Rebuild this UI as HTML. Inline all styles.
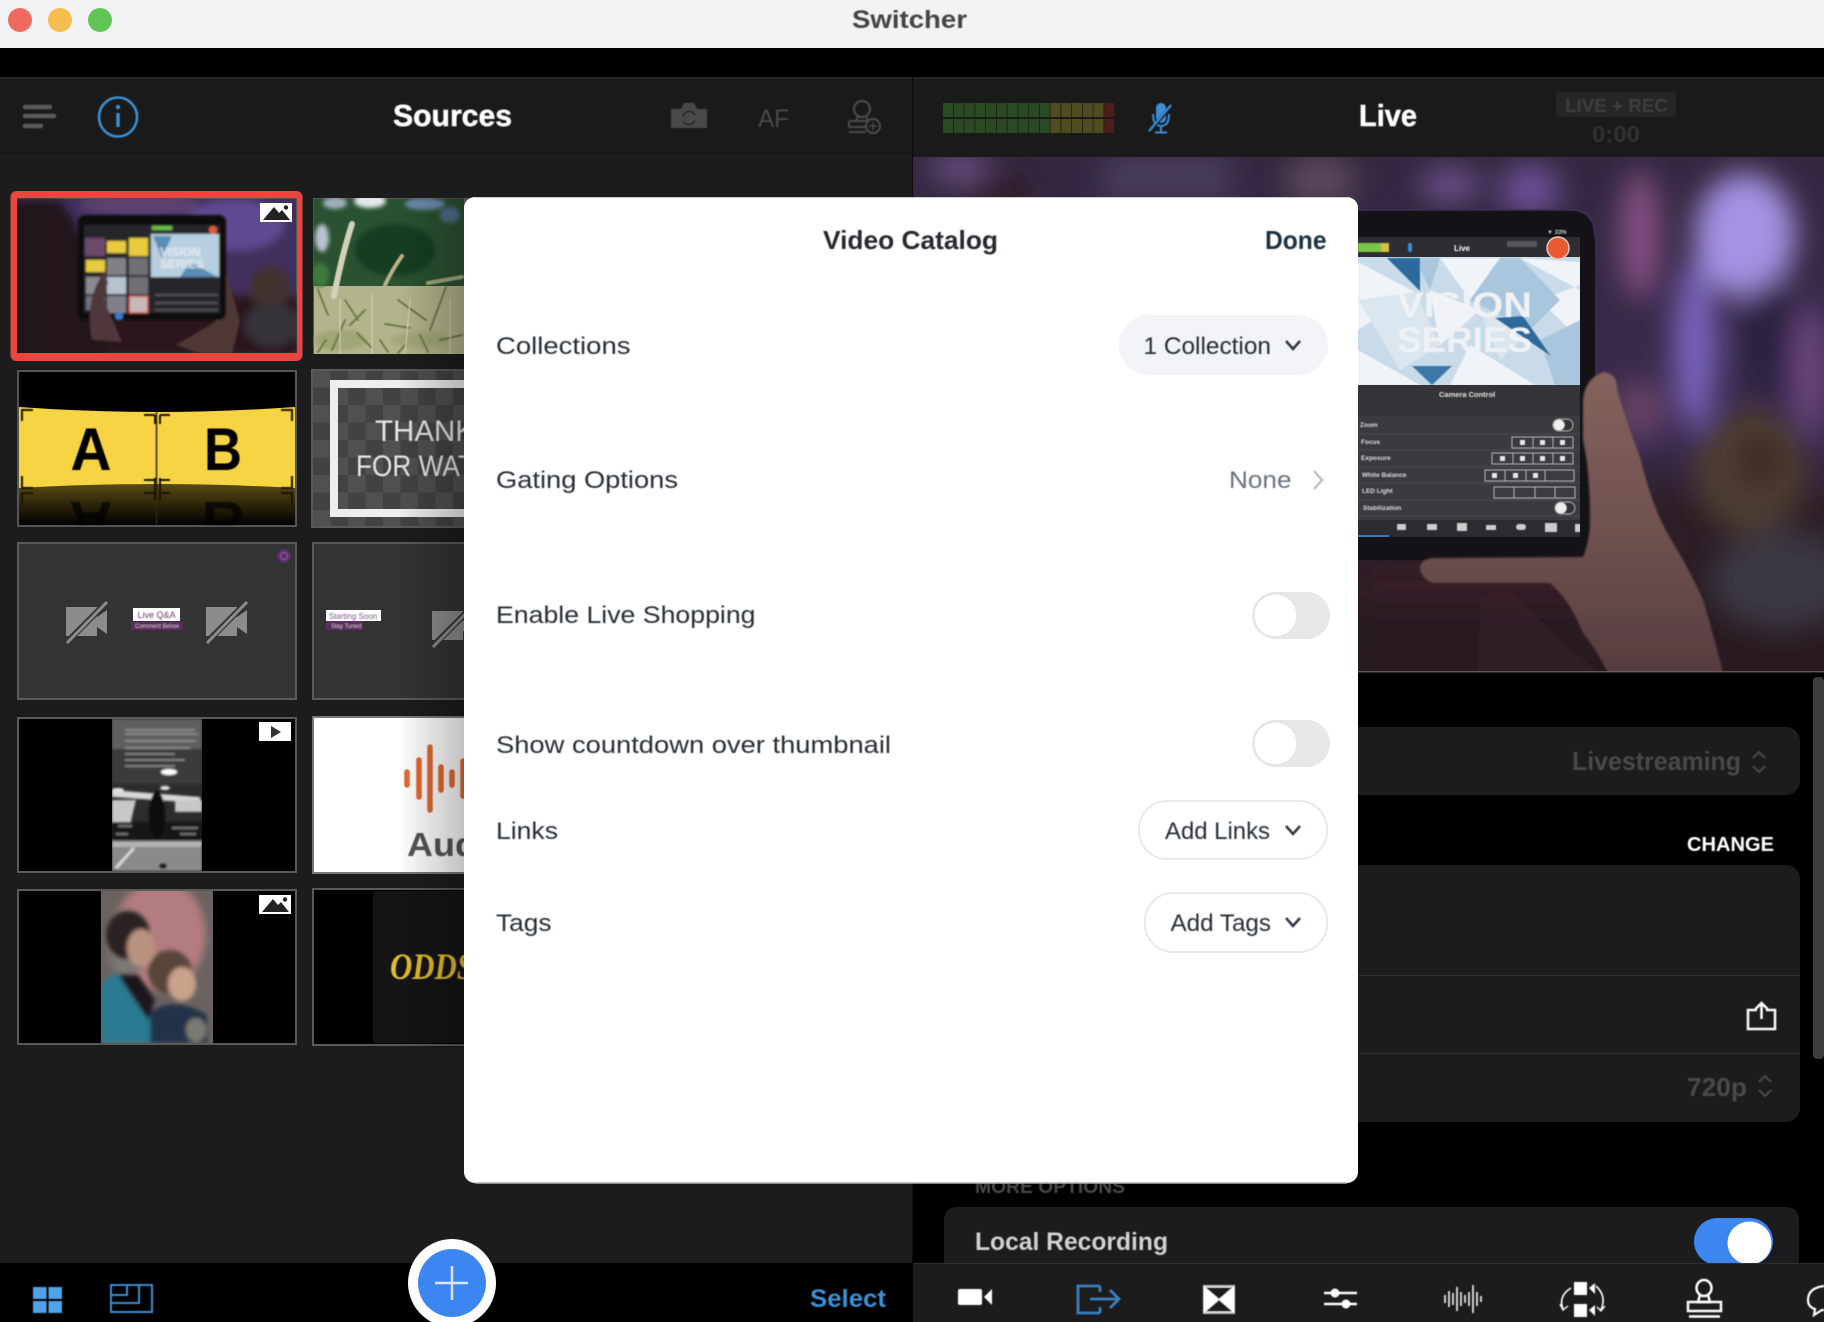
<!DOCTYPE html>
<html><head><meta charset="utf-8"><title>Switcher</title>
<style>
html,body{margin:0;padding:0;width:1824px;height:1322px;overflow:hidden;background:#000}
svg{display:block}
text{font-family:"Liberation Sans",sans-serif}
</style></head><body>
<svg width="1824" height="1322" viewBox="0 0 1824 1322" xmlns="http://www.w3.org/2000/svg">
<defs>
<filter id="b05" x="-5%" y="-5%" width="110%" height="110%"><feGaussianBlur stdDeviation="0.5"/></filter>
<filter id="b1" x="-10%" y="-10%" width="120%" height="120%"><feGaussianBlur stdDeviation="1"/></filter>
<filter id="b2" x="-20%" y="-20%" width="140%" height="140%"><feGaussianBlur stdDeviation="2"/></filter>
<filter id="b4" x="-30%" y="-30%" width="160%" height="160%"><feGaussianBlur stdDeviation="4"/></filter>
<filter id="b14" x="-60%" y="-60%" width="220%" height="220%"><feGaussianBlur stdDeviation="14"/></filter>
<linearGradient id="pv" x1="0" y1="0" x2="0" y2="1"><stop offset="0" stop-color="#33283f"/><stop offset=".55" stop-color="#3a2b50"/><stop offset=".68" stop-color="#2c1f27"/><stop offset="1" stop-color="#271a1f"/></linearGradient>
<linearGradient id="hand" x1="0" y1="0" x2="0" y2="1"><stop offset="0" stop-color="#85635c"/><stop offset=".6" stop-color="#6c4f4e"/><stop offset="1" stop-color="#573c40"/></linearGradient>
<linearGradient id="shade" x1="0" y1="0" x2="1" y2="0"><stop offset="0" stop-color="#000" stop-opacity="0"/><stop offset="1" stop-color="#000" stop-opacity=".24"/></linearGradient>
<linearGradient id="refl" x1="0" y1="0" x2="0" y2="1"><stop offset="0" stop-color="#5a4a14"/><stop offset="1" stop-color="#000"/></linearGradient>
<pattern id="chk" x="313" y="370" width="35" height="35" patternUnits="userSpaceOnUse"><rect width="35" height="35" fill="#424242"/><rect width="17.5" height="17.5" fill="#505050"/><rect x="17.5" y="17.5" width="17.5" height="17.5" fill="#505050"/></pattern>
<clipPath id="c1"><rect x="17" y="198" width="280" height="155"/></clipPath>
<clipPath id="c2"><rect x="313" y="198" width="151" height="156"/></clipPath>
<clipPath id="c5"><rect x="112" y="719" width="90" height="152"/></clipPath>
<clipPath id="c6"><rect x="101" y="891" width="112" height="152"/></clipPath>
<clipPath id="cab"><rect x="19" y="490" width="276" height="35"/></clipPath>
<clipPath id="cpv"><rect x="913" y="157" width="911" height="515"/></clipPath>
<clipPath id="cscr"><path d="M1300 237H1580V537H1300Z"/></clipPath>
<clipPath id="cr"><rect x="944" y="1207" width="855" height="56"/></clipPath>
<g id="camoff"><path d="M1 5H32V15L42 8V32L32 25V34H1Z" fill="#8c8c8c"/><path d="M3 39L41 1" stroke="#333" stroke-width="6"/><path d="M2 41L42 0" stroke="#8c8c8c" stroke-width="3"/></g>
<g id="mount"><rect width="32" height="19" fill="#fff"/><path d="M3 17L14 4L19 10L22 7L30 17Z" fill="#222"/><circle cx="26" cy="4.500" r="2.200" fill="#222"/></g>
</defs>

<!-- base -->
<rect width="1824" height="1322" fill="#000"/>
<rect width="1824" height="48" fill="#f3f2f5"/>
<circle cx="20" cy="20" r="12" fill="#ee6a5f"/><circle cx="60" cy="20" r="12" fill="#f6be4f"/><circle cx="100" cy="20" r="12" fill="#61c454"/>
<g filter="url(#b05)"><text x="852" y="28" font-size="25" font-weight="700" fill="#444" textLength="115" lengthAdjust="spacingAndGlyphs">Switcher</text></g>

<!-- left panel -->
<rect x="0" y="77" width="912" height="79" fill="#1a1a1a"/>
<rect x="0" y="77" width="912" height="2" fill="#262626"/>
<rect x="0" y="156" width="912" height="1107" fill="#1c1c1c"/>
<rect x="0" y="156" width="912" height="1" fill="#222"/>
<g filter="url(#b05)">
<path d="M25 107H50M25 116H54M25 126H41" stroke="#5a5a5a" stroke-width="4.500" stroke-linecap="round"/>
<ellipse cx="118" cy="117" rx="19" ry="19.500" fill="none" stroke="#3a8fd2" stroke-width="2.600"/>
<path d="M118 113V127" stroke="#3a8fd2" stroke-width="3.500"/><circle cx="118" cy="107" r="2.200" fill="#3a8fd2"/>
<text x="393" y="126" font-size="31" font-weight="700" fill="#fff" stroke="#fff" stroke-width=".5" textLength="119" lengthAdjust="spacingAndGlyphs">Sources</text>
<path d="M671 109H681L684 103H694L697 109H707V128H671Z" fill="#4a4a4a"/>
<path d="M683 116a6.500 6.500 0 0 1 12-1M695 120a6.500 6.500 0 0 1-12 1" fill="none" stroke="#222" stroke-width="1.600"/>
<text x="758" y="127" font-size="25" fill="#4a4a4a" textLength="31" lengthAdjust="spacingAndGlyphs">AF</text>
<g fill="none" stroke="#4a4a4a" stroke-width="2.200"><circle cx="862" cy="109" r="8"/><path d="M858 116L856 121M866 116L868 121M849 121H868M849 121V127H867M849 132H866"/><circle cx="873" cy="126" r="7"/><path d="M873 122V130M869 126H877" stroke-width="1.500"/></g>
</g>

<!-- tile 1 -->
<rect x="10.500" y="191" width="292" height="170" rx="6" fill="#e8473f"/>
<rect x="17" y="198" width="280" height="155" fill="#555"/>
<g clip-path="url(#c1)">
<rect x="18" y="199" width="278" height="153" fill="#41305e"/>
<g filter="url(#b4)">
<ellipse cx="235" cy="225" rx="50" ry="26" fill="#5f4890"/><ellipse cx="140" cy="205" rx="60" ry="12" fill="#5c4072"/>
<rect x="18" y="296" width="280" height="60" fill="#2a191e"/>
<ellipse cx="270" cy="288" rx="20" ry="22" fill="#40302e"/><ellipse cx="272" cy="325" rx="28" ry="22" fill="#353038"/>
<path d="M10 200H60Q90 240 100 300L108 360H10Z" fill="#20131a"/>
</g>
<g filter="url(#b1)">
<path d="M225 270L240 320L232 355H205L176 345L215 322Z" fill="#4e3836"/>
<rect x="78" y="215" width="148" height="105" rx="7" fill="#0e0e10"/>
<rect x="84" y="225" width="136" height="88" fill="#26262a"/>
<rect x="151" y="234" width="68" height="43" fill="#b7cfe0"/><path d="M153 236L172 236L162 258ZM190 262L218 277H180Z" fill="#5a8cb4"/>
<text x="160" y="256" font-size="12" fill="#e8eef4" font-weight="700">VISION</text><text x="160" y="268" font-size="12" fill="#e8eef4" font-weight="700">SERIES</text>
<rect x="85" y="238" width="20" height="18" fill="#6b4a6a"/><rect x="107" y="241" width="19" height="12" fill="#e8cc3e"/><rect x="129" y="238" width="19" height="18" fill="#e8cc3e"/>
<rect x="86" y="260" width="19" height="12" fill="#e8cc3e"/><rect x="107" y="258" width="19" height="17" fill="#808086"/><rect x="129" y="258" width="19" height="17" fill="#707076"/>
<rect x="86" y="277" width="19" height="17" fill="#8a8a90"/><rect x="107" y="277" width="19" height="17" fill="#b7c2ce"/><rect x="129" y="277" width="19" height="17" fill="#707076"/>
<rect x="86" y="296" width="19" height="14" fill="#70707a"/><rect x="107" y="296" width="19" height="17" fill="#80808a"/><rect x="129" y="296" width="19" height="17" fill="#c8b8b8" stroke="#c03c34" stroke-width="1.500"/>
<rect x="152" y="226" width="20" height="4" fill="#6cc24a"/><circle cx="213" cy="230" r="4" fill="#e85a38"/>
<path d="M155 295H218M155 303H218M155 310H218" stroke="#55555a" stroke-width="2"/>
<path d="M92 340Q84 300 104 272L108 282L104 300L122 342Z" fill="#50393a"/>
<circle cx="119" cy="316" r="4" fill="#3a7ccc"/>
</g>
</g>
<use href="#mount" x="260" y="203"/>

<!-- tile 2 wheat -->
<rect x="313" y="198" width="160" height="156" fill="#555"/>
<g clip-path="url(#c2)">
<rect x="314" y="199" width="160" height="90" fill="#2a5230"/>
<rect x="314" y="286" width="160" height="68" fill="#b4b48c"/>
<g filter="url(#b2)">
<ellipse cx="370" cy="201" rx="16" ry="7" fill="#e4e8ee"/><ellipse cx="322" cy="238" rx="7" ry="14" fill="#b7c3cf"/><ellipse cx="335" cy="203" rx="12" ry="6" fill="#9fb0bc"/><ellipse cx="425" cy="204" rx="20" ry="6" fill="#6f8cb0"/><ellipse cx="450" cy="215" rx="10" ry="8" fill="#50708c"/>
<ellipse cx="395" cy="250" rx="40" ry="26" fill="#163e22"/><ellipse cx="320" cy="275" rx="9" ry="12" fill="#3c7a3a"/>
<ellipse cx="340" cy="340" rx="26" ry="10" fill="#a0a674"/><ellipse cx="420" cy="340" rx="30" ry="8" fill="#a4a878"/>
</g>
<g filter="url(#b05)" fill="none" stroke-linecap="round">
<path d="M334 296Q342 255 352 224" stroke="#d2d2b8" stroke-width="6"/><path d="M385 285Q392 270 402 256" stroke="#b8b088" stroke-width="4"/>
<path d="M428 283L462 277" stroke="#a4a97c" stroke-width="4"/>
<path d="M398 300L426 320M446 287L430 330M385 324L410 328M357 333L372 348M318 290L328 315M345 320L332 350M405 345L398 353M365 310L350 325M326 340L318 352M380 340L388 352M440 340L462 335M345 300L358 320M420 335L428 352" stroke="#6c7f46" stroke-width="2"/>
<path d="M340 300V354M372 295V354M410 300L405 354M450 300V354" stroke="#d8d8bc" stroke-width="1"/>
</g></g>

<!-- tile AB -->
<rect x="17" y="370" width="280" height="157" fill="#555"/>
<rect x="19" y="372" width="276" height="153" fill="#000"/>
<path d="M19 407Q90 412 156 412Q222 412 295 407V489H19Z" fill="#f7d443"/>
<path d="M19 488Q90 484 156 484Q222 484 295 488V525H19Z" fill="url(#refl)"/>
<g filter="url(#b05)">
<path d="M156.500 412V525" stroke="#2e2608" stroke-width="1.500"/>
<text x="91" y="470" font-size="60" font-weight="700" fill="#000" text-anchor="middle" textLength="41" lengthAdjust="spacingAndGlyphs">A</text>
<text x="223" y="470" font-size="60" font-weight="700" fill="#000" text-anchor="middle" textLength="38" lengthAdjust="spacingAndGlyphs">B</text>
<g fill="none" stroke="#1b1703" stroke-width="2"><path d="M22 421V410H33M155 415H144M155 415V424M160 415H170M160 415V424M292 421V410H281M22 476V488H33M155 480H144M160 480H170M155 478V490M160 478V490M292 476V488H281M22 506V493H33M292 506V493H281M155 493H144M160 493H170M155 490V500M160 490V500"/></g>
<g clip-path="url(#cab)"><g transform="translate(0,972) scale(1,-1)" opacity=".7">
<text x="91" y="470" font-size="60" font-weight="700" fill="#000" text-anchor="middle">A</text>
<text x="223" y="470" font-size="60" font-weight="700" fill="#000" text-anchor="middle">B</text></g></g>
</g>

<!-- tile Thank -->
<rect x="312" y="370" width="160" height="157" fill="url(#chk)" stroke="#5a5a5a" stroke-width="2"/>
<rect x="334" y="384" width="140" height="129" fill="url(#chk)" stroke="#eee" stroke-width="8"/>
<g filter="url(#b05)"><text x="375" y="441" font-size="30" fill="#e8e8e8" textLength="100" lengthAdjust="spacingAndGlyphs">THANK</text>
<text x="356" y="476" font-size="30" fill="#e8e8e8" textLength="118" lengthAdjust="spacingAndGlyphs">FOR WAT</text></g>

<!-- tile QA -->
<rect x="18" y="543" width="278" height="156" fill="#333" stroke="#5a5a5a" stroke-width="2"/>
<use href="#camoff" x="65" y="602"/><use href="#camoff" x="205" y="602"/>
<rect x="133" y="608" width="47" height="13" fill="#fff"/><rect x="131" y="622" width="52" height="8" fill="#5c2c5e"/>
<g filter="url(#b05)"><text x="156.500" y="618" font-size="9" fill="#6a3c70" text-anchor="middle">Live Q&amp;A</text>
<text x="157" y="628" font-size="6" fill="#ddd" text-anchor="middle">Comment Below</text>
<circle cx="284" cy="556" r="7" fill="#5c2d6b"/><circle cx="284" cy="556" r="3.500" fill="none" stroke="#8a5a98" stroke-width="1"/></g>
<!-- tile col2 row3 -->
<rect x="313" y="543" width="160" height="156" fill="#333" stroke="#5a5a5a" stroke-width="2"/>
<rect x="326" y="610" width="55" height="11" fill="#fff"/><rect x="326" y="621" width="37" height="9" fill="#5c2c5e"/>
<g filter="url(#b05)"><text x="353" y="619" font-size="8" fill="#7a5a80" text-anchor="middle">Starting Soon</text><text x="331" y="628" font-size="6" fill="#ddd">Stay Tuned</text></g>
<use href="#camoff" x="431" y="606"/>

<!-- tile col1 row4 -->
<rect x="18" y="718" width="278" height="154" fill="#000" stroke="#5a5a5a" stroke-width="2"/>
<g clip-path="url(#c5)"><rect x="112" y="719" width="90" height="152" fill="#2c2c2c"/>
<g filter="url(#b1)"><rect x="112" y="719" width="90" height="30" fill="#5f5f5f"/><rect x="112" y="749" width="90" height="35" fill="#3a3a3a"/>
<ellipse cx="169" cy="772" rx="8" ry="3" fill="#fff"/><ellipse cx="165" cy="788" rx="5" ry="2" fill="#eee"/><ellipse cx="118" cy="790" rx="6" ry="2" fill="#eee"/>
<path d="M112 790L200 797V803L112 797Z" fill="#d8d8d8"/><path d="M112 800H136L130 825H112ZM175 800H202V812H175Z" fill="#c8c8c8"/>
<rect x="112" y="822" width="90" height="18" fill="#161616"/>
<path d="M118 826H132M172 828H198M116 834H128M180 834H196" stroke="#777" stroke-width="2"/>
<rect x="112" y="841" width="90" height="6" fill="#b4b4b4"/><rect x="112" y="847" width="90" height="24" fill="#8a8a8a"/>
<path d="M116 868L134 848" stroke="#e0e0e0" stroke-width="2.500"/><ellipse cx="163" cy="866" rx="4" ry="3" fill="#1c1c1c"/>
<ellipse cx="157" cy="815" rx="8" ry="24" fill="#080808"/><path d="M125 730H195M125 734H198M125 741H196M125 748H190M125 754H175M125 760H185M125 766H175" stroke="#a8a8a8" stroke-width="1"/></g></g>
<rect x="259" y="722" width="32" height="19" fill="#fff"/><path d="M271 726L281 732L271 738Z" fill="#333"/>

<!-- tile audio -->
<rect x="313" y="717" width="160" height="156" fill="#fff" stroke="#777" stroke-width="2"/>
<g filter="url(#b05)"><path d="M407 772V785M419 760V797M430 747V810M441 767V790M452 772V785M463 761V796" stroke="#e2692e" stroke-width="5.500" stroke-linecap="round"/>
<text x="407" y="856" font-size="33" font-weight="700" fill="#555" textLength="70" lengthAdjust="spacingAndGlyphs">Aud</text></g>

<!-- tile col1 row5 -->
<rect x="18" y="890" width="278" height="154" fill="#000" stroke="#5a5a5a" stroke-width="2"/>
<g clip-path="url(#c6)"><rect x="101" y="891" width="112" height="152" fill="#6a6260"/>
<g filter="url(#b4)"><ellipse cx="160" cy="935" rx="46" ry="55" fill="#b37c80"/>
<ellipse cx="128" cy="945" rx="20" ry="34" fill="#7c7876"/></g>
<g filter="url(#b2)">
<ellipse cx="128" cy="935" rx="22" ry="24" fill="#2a2424"/>
<ellipse cx="141" cy="948" rx="14" ry="19" fill="#ba9280"/>
<path d="M101 985Q112 972 122 975L150 1005V1043H101Z" fill="#2a7a92"/>
<path d="M118 975L138 975L155 1000L148 1020Z" fill="#1e181a"/>
<ellipse cx="170" cy="972" rx="22" ry="22" fill="#584438"/>
<ellipse cx="182" cy="984" rx="14" ry="17" fill="#c8a28a"/>
<path d="M150 1043V1012Q175 995 207 1015V1043Z" fill="#22304a"/>
<ellipse cx="196" cy="1030" rx="10" ry="12" fill="#7c7a74"/></g></g>
<use href="#mount" x="259" y="895"/>

<!-- tile odds -->
<rect x="313" y="889" width="160" height="156" fill="#000" stroke="#5a5a5a" stroke-width="2"/>
<rect x="373" y="891" width="100" height="152" fill="#141417"/>
<g filter="url(#b05)"><text x="390" y="979" font-size="37" font-weight="700" font-style="italic" fill="#e4be2c" textLength="84" lengthAdjust="spacingAndGlyphs" style="font-family:'Liberation Serif',serif">ODDS</text></g>

<!-- modal side shadow on col 2 -->
<rect x="398" y="198" width="66" height="850" fill="url(#shade)"/>

<!-- bottom left -->
<rect x="0" y="1263" width="912" height="59" fill="#000"/>
<g filter="url(#b05)">
<g fill="#51a3e8"><rect x="33" y="1287" width="13.500" height="12"/><rect x="48.500" y="1287" width="13.500" height="12"/><rect x="33" y="1301" width="13.500" height="12"/><rect x="48.500" y="1301" width="13.500" height="12"/></g>
<g fill="none" stroke="#3e8ed0" stroke-width="2"><rect x="111" y="1285" width="41" height="27"/><path d="M111 1295H127V1285M111 1303H139V1285"/></g>
</g>
<circle cx="452" cy="1283" r="44" fill="#fff"/><circle cx="452" cy="1283" r="34" fill="#3c86f2"/>
<path d="M435 1283H468M452 1266V1300" stroke="#dfe4ea" stroke-width="2.500"/>
<g filter="url(#b05)"><text x="810" y="1307" font-size="25" font-weight="700" fill="#3d8fd6" textLength="76" lengthAdjust="spacingAndGlyphs">Select</text></g>

<!-- right header -->
<rect x="913" y="77" width="911" height="80" fill="#1a1a1a"/>
<rect x="913" y="77" width="911" height="2" fill="#262626"/>
<rect x="912" y="77" width="1" height="1186" fill="#0d0d0d"/>
<g id="meter" fill="#2b4a24">
<rect x="943" y="103" width="10" height="14"/><rect x="943" y="119" width="10" height="14"/>
<rect x="953.800" y="103" width="10" height="14"/><rect x="953.800" y="119" width="10" height="14"/>
<rect x="964.500" y="103" width="10" height="14"/><rect x="964.500" y="119" width="10" height="14"/>
<rect x="975.300" y="103" width="10" height="14"/><rect x="975.300" y="119" width="10" height="14"/>
<rect x="986" y="103" width="10" height="14"/><rect x="986" y="119" width="10" height="14"/>
<rect x="996.800" y="103" width="10" height="14"/><rect x="996.800" y="119" width="10" height="14"/>
<rect x="1007.500" y="103" width="10" height="14"/><rect x="1007.500" y="119" width="10" height="14"/>
<rect x="1018.300" y="103" width="10" height="14"/><rect x="1018.300" y="119" width="10" height="14"/>
<rect x="1029" y="103" width="10" height="14"/><rect x="1029" y="119" width="10" height="14"/>
<rect x="1039.800" y="103" width="10" height="14"/><rect x="1039.800" y="119" width="10" height="14"/>
<g fill="#4f4c1f">
<rect x="1050.500" y="103" width="10" height="14"/><rect x="1050.500" y="119" width="10" height="14"/>
<rect x="1061.300" y="103" width="10" height="14"/><rect x="1061.300" y="119" width="10" height="14"/>
<rect x="1072" y="103" width="10" height="14"/><rect x="1072" y="119" width="10" height="14"/>
<rect x="1082.800" y="103" width="10" height="14"/><rect x="1082.800" y="119" width="10" height="14"/>
<rect x="1093.500" y="103" width="10" height="14"/><rect x="1093.500" y="119" width="10" height="14"/></g>
<rect x="1104.300" y="103" width="10" height="14" fill="#4d1d1a"/><rect x="1104.300" y="119" width="10" height="14" fill="#4d1d1a"/>
</g>
<g filter="url(#b05)">
<rect x="1156" y="103" width="10" height="20" rx="5" fill="#3a8fd8"/>
<path d="M1153 114Q1153 126 1161 126Q1169 126 1169 114M1161 126V132M1155 132.500H1167" fill="none" stroke="#3a8fd8" stroke-width="2"/>
<path d="M1149 132L1172 105" stroke="#1a1a1a" stroke-width="4"/><path d="M1149 131L1171 105" stroke="#3a8fd8" stroke-width="2"/>
<text x="1359" y="126" font-size="31" font-weight="700" fill="#fff" stroke="#fff" stroke-width=".5" textLength="58" lengthAdjust="spacingAndGlyphs">Live</text>
<rect x="1556" y="92" width="120" height="25" rx="2" fill="#282828"/>
<text x="1565" y="112" font-size="18" font-weight="700" fill="#3e3e3e" textLength="103" lengthAdjust="spacingAndGlyphs">LIVE + REC</text>
<text x="1592" y="142" font-size="23" font-weight="700" fill="#323232" textLength="48" lengthAdjust="spacingAndGlyphs">0:00</text>
</g>
<!-- preview -->
<g clip-path="url(#cpv)">
<rect x="913" y="157" width="911" height="515" fill="url(#pv)"/>
<g filter="url(#b14)">
<ellipse cx="960" cy="168" rx="30" ry="14" fill="#6e5288"/>
<ellipse cx="1000" cy="195" rx="34" ry="22" fill="#2e1c28"/>
<rect x="1105" y="155" width="125" height="45" fill="#4a3c5a"/>
<ellipse cx="1320" cy="180" rx="36" ry="22" fill="#5f4c5c"/>
<ellipse cx="1450" cy="185" rx="30" ry="16" fill="#6e5292"/>
<ellipse cx="1530" cy="190" rx="30" ry="26" fill="#6a5096"/>
<ellipse cx="1745" cy="235" rx="50" ry="62" fill="#a592e2"/>
<ellipse cx="1695" cy="345" rx="22" ry="85" fill="#7864ba"/>
<ellipse cx="1640" cy="235" rx="20" ry="65" fill="#875084"/>
<ellipse cx="1770" cy="340" rx="30" ry="60" fill="#2c2240"/>
<ellipse cx="1810" cy="370" rx="18" ry="65" fill="#6c4680"/>
<ellipse cx="1640" cy="410" rx="25" ry="30" fill="#684264"/>
<ellipse cx="1750" cy="470" rx="56" ry="62" fill="#4e3c32"/>
<ellipse cx="1780" cy="580" rx="70" ry="50" fill="#3a3742"/>
<rect x="1360" y="565" width="250" height="40" fill="#361d26"/>
</g>
<ellipse cx="1760" cy="460" rx="22" ry="26" fill="#3e2c28" filter="url(#b14)"/>
<!-- tablet -->
<path d="M1300 210H1570Q1595 210 1595 238V535Q1595 560 1570 560H1300Z" fill="#141216"/>
<path d="M1300 210H1570Q1595 210 1595 238" fill="none" stroke="#3c2f55" stroke-width="1.500"/>
<g clip-path="url(#cscr)">
<rect x="1300" y="237" width="280" height="20" fill="#2e2e32"/>
<rect x="1300" y="257" width="280" height="128" fill="#c9dbe8"/>
<g filter="url(#b05)">
<path d="M1358 262L1415 292L1358 330ZM1440 258L1470 300L1500 258ZM1520 258L1580 290V262ZM1358 350L1420 385H1358ZM1470 345L1535 385H1450ZM1430 290L1480 310L1440 345ZM1540 300L1580 285V340Z" fill="#f0f4f8"/>
<path d="M1500 258L1470 300L1530 330L1560 300L1520 258ZM1540 340L1580 320V385H1555ZM1415 258L1440 258L1430 290Z" fill="#a9c6dc"/>
<path d="M1358 300L1415 292L1440 345L1400 370ZM1480 310L1530 330L1500 360Z" fill="#dbe6ef"/>
<path d="M1387 258H1420V291Z" fill="#2c6a9e"/>
<path d="M1495 318L1523 316L1551 356Z" fill="#2a6a9e"/>
<path d="M1412 366H1452L1432 385Z" fill="#3a78a8"/>
</g>
<g filter="url(#b05)" font-weight="700">
<text x="1397" y="317" font-size="35" fill="#f0f2f4" textLength="135" lengthAdjust="spacingAndGlyphs">VISION</text>
<text x="1397" y="352" font-size="35" fill="#f0f2f4" textLength="135" lengthAdjust="spacingAndGlyphs">SERIES</text></g>
<rect x="1300" y="385" width="280" height="135" fill="#3a3a3f"/>
<rect x="1300" y="385" width="280" height="31" fill="#343438"/>
<rect x="1300" y="520" width="280" height="17" fill="#2c2c30"/>
<rect x="1300" y="536" width="67" height="1.500" fill="#7c7c82"/>
<rect x="1350" y="535" width="39" height="2" fill="#3a78c0"/>
<g filter="url(#b05)">
<rect x="1358" y="243" width="30" height="9" fill="#7cc44a"/><rect x="1381" y="243" width="8" height="9" fill="#d8c040"/>
<rect x="1408" y="243" width="4" height="9" rx="2" fill="#3a8fd8"/>
<text x="1454" y="251" font-size="8" font-weight="700" fill="#fff">Live</text>
<rect x="1507" y="241" width="30" height="6" fill="#55555a"/>
<text x="1439" y="397" font-size="7.500" font-weight="700" fill="#e8e0dc">Camera Control</text>
<g font-size="6.500" font-weight="700" fill="#ddd"><text x="1360" y="427">Zoom</text><text x="1361" y="444">Focus</text><text x="1361" y="460">Exposure</text><text x="1362" y="477">White Balance</text><text x="1362" y="493">LED Light</text><text x="1363" y="510">Stabilization</text></g>
<path d="M1355 434H1580M1355 450H1580M1355 467H1580M1355 483H1580M1355 500H1580M1355 516H1580" stroke="#4a4a50" stroke-width="1"/>
<g fill="none" stroke="#b8b8be" stroke-width="1"><rect x="1512" y="437" width="61" height="11"/><path d="M1533 437V448M1553 437V448"/>
<rect x="1492" y="453" width="81" height="11"/><path d="M1513 453V464M1533 453V464M1553 453V464"/>
<rect x="1485" y="470" width="89" height="11"/><path d="M1505 470V481M1526 470V481M1545 470V481"/>
<rect x="1494" y="487" width="81" height="11"/><path d="M1514 487V498M1535 487V498M1555 487V498"/></g>
<g fill="#e8e8e8"><rect x="1520" y="440" width="5" height="5"/><rect x="1540" y="440" width="5" height="5"/><rect x="1560" y="440" width="5" height="5"/><rect x="1500" y="456" width="5" height="5"/><rect x="1520" y="456" width="5" height="5"/><rect x="1540" y="456" width="5" height="5"/><rect x="1560" y="456" width="5" height="5"/><rect x="1492" y="473" width="5" height="5"/><rect x="1513" y="473" width="5" height="5"/><rect x="1533" y="473" width="5" height="5"/></g>
<rect x="1553" y="419" width="20" height="12" rx="6" fill="#303034" stroke="#aaa" stroke-width="1"/><circle cx="1559" cy="425" r="5.500" fill="#eee"/>
<rect x="1555" y="502" width="20" height="12" rx="6" fill="#303034" stroke="#aaa" stroke-width="1"/><circle cx="1561" cy="508" r="5.500" fill="#eee"/>
<g fill="#ccc"><rect x="1397" y="524" width="9" height="6" rx="1"/><rect x="1427" y="524" width="10" height="6" rx="1"/><rect x="1457" y="523" width="10" height="8"/><rect x="1486" y="525" width="10" height="5"/><rect x="1516" y="524" width="10" height="6" rx="3"/><rect x="1545" y="523" width="12" height="9"/><rect x="1575" y="524" width="6" height="8"/></g>
</g>
</g>
<text x="1547" y="234" font-size="6" font-weight="700" fill="#ccc" filter="url(#b05)">▼ 33%</text>
<circle cx="1558" cy="248" r="11" fill="#e85a30" stroke="#e8c8c0" stroke-width="1.500"/>
<!-- hand -->
<g filter="url(#b1)">
<path d="M1583 400Q1585 378 1604 372Q1617 374 1617 388Q1622 410 1640 457Q1650 500 1667 533Q1690 570 1703 600Q1715 640 1723 673H1608Q1600 655 1583 633Q1570 600 1550 583L1433 583Q1420 578 1420 567Q1422 558 1435 558L1583 557Q1590 540 1590 520Q1590 470 1583 440Z" fill="url(#hand)"/>
<path d="M1480 600Q1490 590 1510 590L1560 640L1600 673H1477Z" fill="#3a2529" opacity=".5"/>
</g>
</g>
<rect x="913" y="671" width="911" height="1.500" fill="#7a6c72" opacity=".7"/>

<!-- right settings -->
<rect x="944" y="727" width="856" height="68" rx="14" fill="#1c1c1e"/>
<rect x="944" y="865" width="856" height="257" rx="14" fill="#1c1c1e"/>
<rect x="944" y="975" width="856" height="1" fill="#2f2f31"/><rect x="944" y="1053" width="856" height="1" fill="#2f2f31"/>
<rect x="1813" y="677" width="11" height="382" rx="4" fill="#3c3c3c"/>
<g filter="url(#b05)">
<text x="1572" y="770" font-size="26" font-weight="700" fill="#4a4a4c" textLength="169" lengthAdjust="spacingAndGlyphs">Livestreaming</text>
<path d="M1753 758L1759 752L1765 758M1753 766L1759 772L1765 766" fill="none" stroke="#4a4a4c" stroke-width="2"/>
<text x="1687" y="851" font-size="20" font-weight="700" fill="#fff" textLength="87" lengthAdjust="spacingAndGlyphs">CHANGE</text>
<path d="M1757 1010H1748V1029H1775V1010H1766M1761.500 1019V1003M1755.500 1009L1761.500 1003L1767.500 1009" fill="none" stroke="#fff" stroke-width="2.500"/>
<text x="1687" y="1096" font-size="26" font-weight="700" fill="#4a4a4c" textLength="60" lengthAdjust="spacingAndGlyphs">720p</text>
<path d="M1759 1082L1765 1076L1771 1082M1759 1090L1765 1096L1771 1090" fill="none" stroke="#4a4a4c" stroke-width="2"/>
<text x="975" y="1193" font-size="19" font-weight="700" fill="#4a4a4a" textLength="150" lengthAdjust="spacingAndGlyphs">MORE OPTIONS</text>
</g>
<path d="M944 1263V1221Q944 1207 958 1207H1785Q1799 1207 1799 1221V1263Z" fill="#1c1c1e"/>
<g filter="url(#b05)"><text x="975" y="1250" font-size="25" font-weight="700" fill="#d2d2d2" textLength="193" lengthAdjust="spacingAndGlyphs">Local Recording</text></g>
<g clip-path="url(#cr)"><rect x="1694" y="1218" width="79" height="47" rx="23.500" fill="#3c86f2"/><ellipse cx="1749.500" cy="1243" rx="22" ry="21.500" fill="#fff"/></g>

<!-- right toolbar -->
<rect x="913" y="1263" width="911" height="59" fill="#1c1c1e"/><rect x="913" y="1263" width="911" height="1" fill="#2e2e30"/>
<g filter="url(#b05)">
<rect x="958" y="1289" width="24" height="16" rx="2" fill="#fff"/><path d="M984 1297L992 1289V1305Z" fill="#fff"/>
<path d="M1100 1286H1078V1313H1100M1100 1286V1292M1100 1313V1307" fill="none" stroke="#3a80c0" stroke-width="2.800"/>
<path d="M1090 1299H1118M1110 1290L1119 1299L1110 1308" fill="none" stroke="#3a80c0" stroke-width="2.800"/>
<rect x="1203.500" y="1285.500" width="31" height="28" fill="#fff" stroke="#ddd"/>
<path d="M1205.500 1287.500H1232.500L1219 1299ZM1205.500 1311.500H1232.500L1219 1300Z" fill="#1c1c1e"/>
<path d="M1204 1286L1219 1299.500L1204 1313ZM1234 1286L1219 1299.500L1234 1313Z" fill="#fff"/>
<path d="M1204 1286H1234M1204 1313H1234" stroke="#bbb" stroke-width="1.500"/>
<path d="M1324 1293H1357M1324 1304H1357" stroke="#fff" stroke-width="2.500"/><circle cx="1335" cy="1293" r="4.500" fill="#fff"/><circle cx="1346" cy="1304" r="4.500" fill="#fff"/>
<path d="M1445 1295V1303M1449 1291V1307M1453 1293V1305M1457 1287V1311M1461 1292V1306M1465 1295V1303M1469 1292V1306M1473 1285V1313M1477 1292V1306M1481 1296V1302" stroke="#e0e0e0" stroke-width="1.800"/>
<rect x="1574" y="1282" width="13" height="13" fill="#fff"/><path d="M1589 1288L1595 1283V1294Z" fill="#fff"/>
<rect x="1574" y="1304" width="13" height="13" fill="#fff"/><path d="M1589 1310L1595 1305V1316Z" fill="#fff"/>
<path d="M1571 1288Q1558 1296 1563 1309M1596 1286Q1607 1296 1601 1310" fill="none" stroke="#fff" stroke-width="1.600"/>
<path d="M1560 1304L1563 1310L1568 1306M1597 1307L1601 1311L1605 1306" fill="none" stroke="#fff" stroke-width="1.400"/>
<ellipse cx="1704" cy="1288" rx="7.500" ry="8" fill="none" stroke="#fff" stroke-width="2.500"/>
<path d="M1700 1295L1698 1302H1710L1708 1295" fill="none" stroke="#fff" stroke-width="2.500"/>
<rect x="1688" y="1302" width="33" height="9" fill="none" stroke="#fff" stroke-width="2.500"/>
<path d="M1689 1316.500H1720" stroke="#fff" stroke-width="2.500"/>
<path d="M1824 1286Q1808 1288 1808 1300Q1808 1307 1815 1309L1814 1315L1822 1310H1824" fill="none" stroke="#fff" stroke-width="2.200"/>
</g>

<!-- modal -->
<rect x="464" y="197" width="894" height="986" rx="11" fill="#fff"/>
<path d="M475 197.500H1347" stroke="#c8c8c8" stroke-width="1"/>
<path d="M475 1183H1347" stroke="#b0b0b0" stroke-width="1.500"/>
<g filter="url(#b05)" fill="#262d36" font-size="24.500">
<text x="823" y="249" font-size="26" font-weight="700" fill="#25292e" textLength="175" lengthAdjust="spacingAndGlyphs">Video Catalog</text>
<text x="1265" y="249" font-size="26" font-weight="700" fill="#1e3040" textLength="61.500" lengthAdjust="spacingAndGlyphs">Done</text>
<text x="496" y="354" textLength="134.500" lengthAdjust="spacingAndGlyphs">Collections</text>
<text x="496" y="488" textLength="182" lengthAdjust="spacingAndGlyphs">Gating Options</text>
<text x="496" y="623" textLength="259.500" lengthAdjust="spacingAndGlyphs">Enable Live Shopping</text>
<text x="496" y="753" textLength="395" lengthAdjust="spacingAndGlyphs">Show countdown over thumbnail</text>
<text x="496" y="839" textLength="62" lengthAdjust="spacingAndGlyphs">Links</text>
<text x="496" y="931" textLength="55.500" lengthAdjust="spacingAndGlyphs">Tags</text>
</g>
<rect x="1119" y="315" width="209" height="60" rx="30" fill="#f2f4f8"/>
<rect x="1139" y="801" width="188" height="58" rx="28" fill="#fff" stroke="#e7e9ed" stroke-width="2"/>
<rect x="1145" y="893" width="182" height="59" rx="28" fill="#fff" stroke="#e7e9ed" stroke-width="2"/>
<g filter="url(#b05)" fill="#262d36" font-size="24.500">
<text x="1143.500" y="354" textLength="127.500" lengthAdjust="spacingAndGlyphs">1 Collection</text>
<text x="1229" y="488" fill="#6b7280" textLength="62.500" lengthAdjust="spacingAndGlyphs">None</text>
<text x="1165" y="839" textLength="105" lengthAdjust="spacingAndGlyphs">Add Links</text>
<text x="1170.500" y="931" textLength="100.500" lengthAdjust="spacingAndGlyphs">Add Tags</text>
<path d="M1286 341L1293 349L1300 341M1286 826L1293 834L1300 826M1286 918L1293 926L1300 918" fill="none" stroke="#2d3640" stroke-width="2.500"/>
<path d="M1314 471L1322 480L1314 489" fill="none" stroke="#aeb1b6" stroke-width="2"/>
</g>
<rect x="1252" y="592" width="78" height="47" rx="23.500" fill="#e6e7e9"/>
<ellipse cx="1275.500" cy="615.500" rx="21.500" ry="21.500" fill="#fff" stroke="#e0e0e0"/>
<rect x="1252" y="720" width="78" height="47" rx="23.500" fill="#e6e7e9"/>
<ellipse cx="1275.500" cy="743.500" rx="21.500" ry="21.500" fill="#fff" stroke="#e0e0e0"/>
</svg>
</body></html>
